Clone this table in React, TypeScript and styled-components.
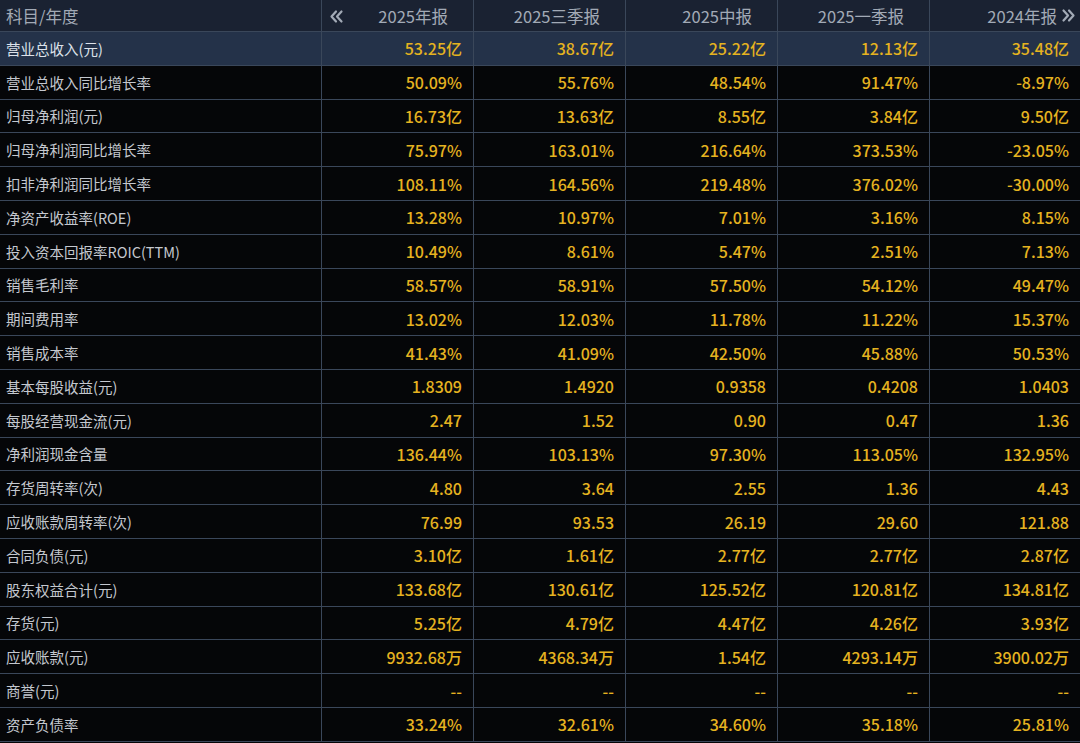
import React from "react";
import styled, { createGlobalStyle } from "styled-components";

const GlobalStyle = createGlobalStyle`
  html, body { margin: 0; padding: 0; background: #050608; }
  body { font-family: "Noto Sans CJK SC", "Noto Sans", sans-serif; }
  * { box-sizing: border-box; }
`;

const Table = styled.div`
  width: 1080px;
  display: grid;
  grid-template-columns: 322px 152px 152px 152px 152px 1fr;
  background: #050608;
`;

const HeadCell = styled.div<{ $first?: boolean; $last?: boolean }>`
  height: 32px;
  display: flex;
  align-items: center;
  justify-content: ${(p) => (p.$first ? "flex-start" : "flex-end")};
  padding: ${(p) => (p.$first ? "0 0 0 6px" : p.$last ? "0 4px 0 0" : "0 25px 0 0")};
  background: #1a2232;
  color: #a2aab6;
  font-size: 16.5px;
  border-bottom: 1px solid #3a475a;
  border-right: ${(p) => (p.$last ? "none" : "1px solid #3a475a")};
  gap: 4px;
  position: relative;
`;

const ArrowBox = styled.span<{ $left?: boolean }>`
  display: flex;
  align-items: center;
  ${(p) => (p.$left ? "position: absolute; left: 7px; top: 9px;" : "")}
`;

const Cell = styled.div<{ $label?: boolean; $hl?: boolean; $last?: boolean }>`
  height: 33.8px;
  display: flex;
  align-items: center;
  justify-content: ${(p) => (p.$label ? "flex-start" : "flex-end")};
  padding: ${(p) => (p.$label ? "0 0 0 6px" : "0 11px 0 0")};
  background: ${(p) => (p.$hl ? "#243249" : "#050608")};
  color: ${(p) => (p.$label ? (p.$hl ? "#dde2ea" : "#c4c8cf") : "#e5b320")};
  font-size: ${(p) => (p.$label ? "14.5px" : "16px")};
  font-weight: ${(p) => (p.$label ? 400 : 500)};
  white-space: nowrap;
  border-bottom: 1px solid #3a475a;
  border-right: ${(p) => (p.$last ? "none" : "1px solid #3a475a")};
`;

const Chevrons = ({ dir }: { dir: "left" | "right" }) => (
  <svg width="15" height="15" viewBox="0 0 15 15" fill="none" stroke="#a2aab6" strokeWidth="2.2" strokeLinecap="round" strokeLinejoin="round">
    {dir === "left" ? (
      <>
        <path d="M7 2.5 L2.5 7.5 L7 12.5" />
        <path d="M12.5 2.5 L8 7.5 L12.5 12.5" />
      </>
    ) : (
      <>
        <path d="M2.5 2.5 L7 7.5 L2.5 12.5" />
        <path d="M8 2.5 L12.5 7.5 L8 12.5" />
      </>
    )}
  </svg>
);

const headers = ["2025年报", "2025三季报", "2025中报", "2025一季报", "2024年报"];

const rows: [string, string[]][] = [
  ["营业总收入(元)", ["53.25亿", "38.67亿", "25.22亿", "12.13亿", "35.48亿"]],
  ["营业总收入同比增长率", ["50.09%", "55.76%", "48.54%", "91.47%", "-8.97%"]],
  ["归母净利润(元)", ["16.73亿", "13.63亿", "8.55亿", "3.84亿", "9.50亿"]],
  ["归母净利润同比增长率", ["75.97%", "163.01%", "216.64%", "373.53%", "-23.05%"]],
  ["扣非净利润同比增长率", ["108.11%", "164.56%", "219.48%", "376.02%", "-30.00%"]],
  ["净资产收益率(ROE)", ["13.28%", "10.97%", "7.01%", "3.16%", "8.15%"]],
  ["投入资本回报率ROIC(TTM)", ["10.49%", "8.61%", "5.47%", "2.51%", "7.13%"]],
  ["销售毛利率", ["58.57%", "58.91%", "57.50%", "54.12%", "49.47%"]],
  ["期间费用率", ["13.02%", "12.03%", "11.78%", "11.22%", "15.37%"]],
  ["销售成本率", ["41.43%", "41.09%", "42.50%", "45.88%", "50.53%"]],
  ["基本每股收益(元)", ["1.8309", "1.4920", "0.9358", "0.4208", "1.0403"]],
  ["每股经营现金流(元)", ["2.47", "1.52", "0.90", "0.47", "1.36"]],
  ["净利润现金含量", ["136.44%", "103.13%", "97.30%", "113.05%", "132.95%"]],
  ["存货周转率(次)", ["4.80", "3.64", "2.55", "1.36", "4.43"]],
  ["应收账款周转率(次)", ["76.99", "93.53", "26.19", "29.60", "121.88"]],
  ["合同负债(元)", ["3.10亿", "1.61亿", "2.77亿", "2.77亿", "2.87亿"]],
  ["股东权益合计(元)", ["133.68亿", "130.61亿", "125.52亿", "120.81亿", "134.81亿"]],
  ["存货(元)", ["5.25亿", "4.79亿", "4.47亿", "4.26亿", "3.93亿"]],
  ["应收账款(元)", ["9932.68万", "4368.34万", "1.54亿", "4293.14万", "3900.02万"]],
  ["商誉(元)", ["--", "--", "--", "--", "--"]],
  ["资产负债率", ["33.24%", "32.61%", "34.60%", "35.18%", "25.81%"]],
];

export default function App() {
  return (
    <>
      <GlobalStyle />
      <Table>
        <HeadCell $first>科目/年度</HeadCell>
        {headers.map((h, i) => (
          <HeadCell key={h} $last={i === headers.length - 1}>
            {i === 0 && (
              <ArrowBox $left>
                <Chevrons dir="left" />
              </ArrowBox>
            )}
            <span>{h}</span>
            {i === headers.length - 1 && (
              <ArrowBox>
                <Chevrons dir="right" />
              </ArrowBox>
            )}
          </HeadCell>
        ))}
        {rows.map(([label, vals], r) => (
          <React.Fragment key={label}>
            <Cell $label $hl={r === 0}>{label}</Cell>
            {vals.map((v, i) => (
              <Cell key={i} $hl={r === 0} $last={i === vals.length - 1}>
                {v}
              </Cell>
            ))}
          </React.Fragment>
        ))}
      </Table>
    </>
  );
}
